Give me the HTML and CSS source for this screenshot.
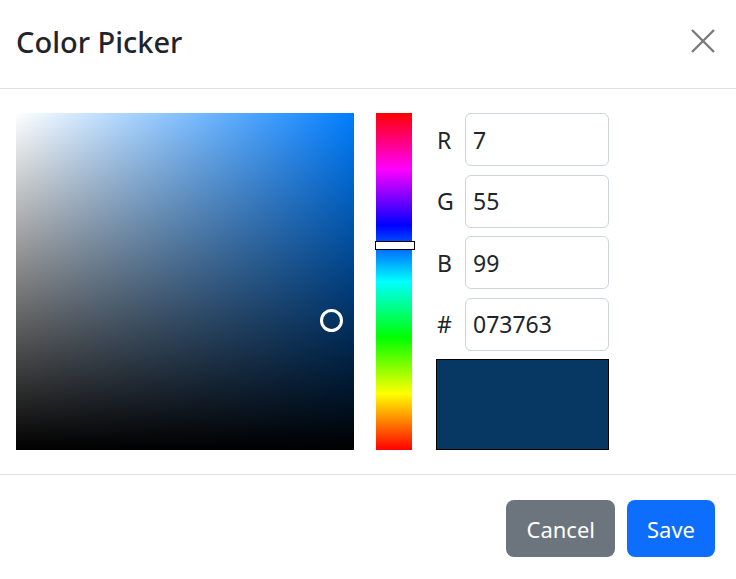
FILE: index.html
```html
<!DOCTYPE html>
<html lang="en">
<head>
  <meta charset="UTF-8">
  <meta name="viewport" content="width=device-width, initial-scale=1.0">
  <title>Color Picker</title>
  <link rel="stylesheet" href="styles.css">
</head>
<body>
  <div class="modal">
    <div class="modal-header">
      <h5 class="modal-title">Color Picker</h5>
      <button type="button" class="btn-close" title="Close">
        <svg width="24" height="24" viewBox="0 0 24 24">
          <path d="M1 1L23 23M23 1L1 23" stroke="#7b7b7b" stroke-width="2.4" fill="none"/>
        </svg>
      </button>
    </div>
    <div class="modal-body">
      <div class="sv-box">
        <span class="sv-marker"></span>
      </div>
      <div class="hue-bar">
        <span class="hue-handle"></span>
      </div>
      <div class="fields">
        <label class="field"><span class="field-label">R</span><input type="text" value="7"></label>
        <label class="field"><span class="field-label">G</span><input type="text" value="55"></label>
        <label class="field"><span class="field-label">B</span><input type="text" value="99"></label>
        <label class="field"><span class="field-label">#</span><input type="text" value="073763"></label>
        <div class="swatch"></div>
      </div>
    </div>
    <div class="modal-footer">
      <button type="button" class="btn btn-secondary">Cancel</button>
      <button type="button" class="btn btn-primary">Save</button>
    </div>
  </div>
</body>
</html>
```

FILE: styles.css
```css
*{margin:0;padding:0;box-sizing:border-box;}

body {
  background: #fff;
  font-family: "Noto Sans", "Liberation Sans", sans-serif;
  color: #212529;
}
.modal {
  width: 736px;
  background: #fff;
}

/* header */
.modal-header {
  display: flex;
  justify-content: space-between;
  align-items: flex-start;
  padding: 24px 21px 29px 16px;
  border-bottom: 1px solid #dee2e6;
}
.modal-title {
  font-size: 29px;
  font-weight: 500;
  line-height: 35px;
}
.btn-close {
  display: block;
  margin-top: 5px;
  width: 24px;
  height: 24px;
  border: 0;
  background: none;
  cursor: pointer;
}
.btn-close svg {
  display: block;
}

/* body */
.modal-body {
  display: flex;
  padding: 24px 16px;
  height: 385px;
}
.sv-box {
  position: relative;
  width: 338px;
  height: 337px;
  background:
    linear-gradient(to top, #000, rgba(0,0,0,0)),
    linear-gradient(to right, #fff, rgb(0,125,255));
}
.sv-marker {
  position: absolute;
  left: 304px;
  top: 196px;
  width: 23px;
  height: 23px;
  border: 3px solid #fff;
  border-radius: 50%;
}
.hue-bar {
  position: relative;
  width: 36px;
  height: 337px;
  margin-left: 22px;
  background: linear-gradient(to bottom, #f00 0%, #f0f 16.66%, #00f 33.33%, #0ff 50%, #0f0 66.66%, #ff0 83.33%, #f00 100%);
}
.hue-handle {
  position: absolute;
  left: -1px;
  top: 128px;
  width: 40px;
  height: 9px;
  background: #fff;
  border: 1px solid #000;
}
.fields {
  display: flex;
  flex-direction: column;
  gap: 8.5px;
  width: 173px;
  margin-left: 24px;
}
.field {
  display: flex;
  align-items: center;
  height: 53px;
}
.field-label {
  width: 29px;
  padding-left: 1px;
  font-size: 23px;
}
.field input {
  width: 144px;
  height: 53px;
  padding: 0 7px;
  border: 1px solid #ced4da;
  border-radius: 6px;
  font-family: inherit;
  font-size: 23px;
  color: #212529;
  background: #fff;
  outline: none;
}
.swatch {
  flex: 1;
  background: #073763;
  border: 1px solid #000;
}

/* footer */
.modal-footer {
  display: flex;
  justify-content: flex-end;
  gap: 12px;
  padding: 25px 21px 22px 16px;
  border-top: 1px solid #dee2e6;
}
.btn {
  height: 57px;
  padding: 0 20px;
  border: 0;
  border-radius: 8px;
  font-family: inherit;
  font-size: 22px;
  color: #fff;
  cursor: pointer;
}
.btn-secondary {
  background: #6c757d;
}
.btn-primary {
  background: #0d6efd;
}
```
